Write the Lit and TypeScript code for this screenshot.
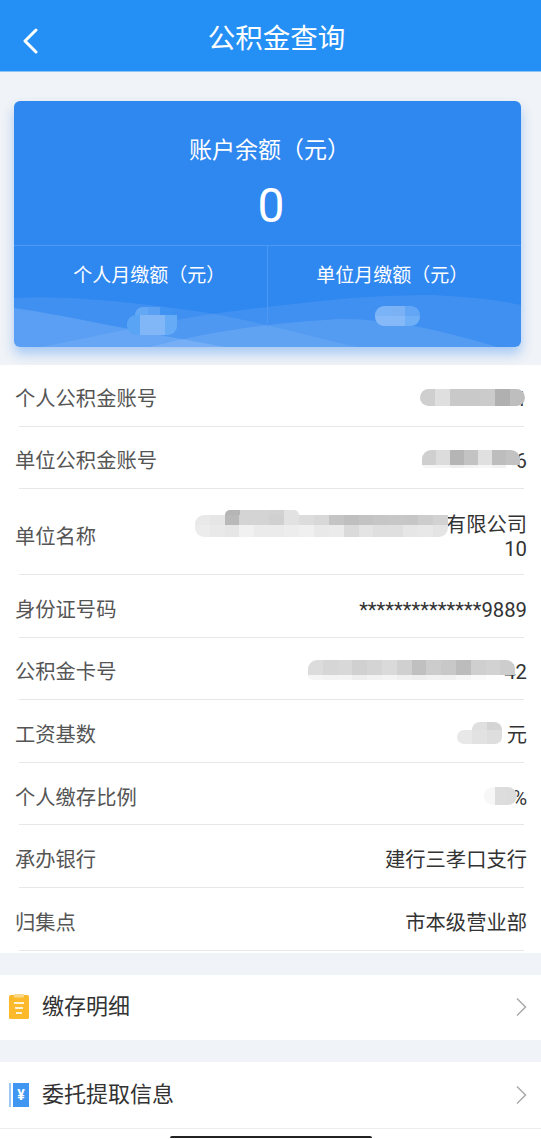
import { LitElement, html, css, svg } from "lit";
import { customElement, property } from "lit/decorators.js";
import { classMap } from "lit/directives/class-map.js";

type MosaicRow = { h: number; x?: number; top?: boolean; c: (string | null)[] };

@customElement("blur-patch")
class BlurPatch extends LitElement {
  @property({ attribute: false }) rows: MosaicRow[] = [];
  @property({ type: Number }) cw = 15;
  static styles = css`
    :host { display: block; position: relative; z-index: 2; flex: none; }
    .r { display: flex; overflow: hidden; width: max-content; }
    .r:first-child { border-top-left-radius: 9px; border-top-right-radius: 9px; }
    .r:last-child { border-bottom-left-radius: 9px; border-bottom-right-radius: 9px; }
    .r.top { border-top-left-radius: 9px; }
    .c { flex: none; }
  `;
  render() {
    return this.rows.map(
      (r) => html`<div class=${classMap({ r: true, top: !!r.top })} style="margin-left:${r.x ?? 0}px">
        ${r.c.map((c) => html`<div class="c" style="width:${this.cw}px;height:${r.h}px;background:${c ?? "transparent"}"></div>`)}
      </div>`
    );
  }
}

const back = svg`<path d="M36 31 L25 42 L36 53" fill="none" stroke="#fff" stroke-width="3" stroke-linecap="round" stroke-linejoin="round" transform="translate(-23 -29)"/>`;

@customElement("app-root")
class AppRoot extends LitElement {
  static styles = css`
    :host {
      display: block; width: 541px; height: 1139px; overflow: hidden; background: #fff;
      font-family: Roboto, "Noto Sans CJK SC", "Noto Sans", sans-serif; color: #333;
    }
    .header {
      height: 71px; background: #2490f5; border-bottom: 1px solid #8cc4f8;
      display: flex; align-items: center; justify-content: center; position: relative; color: #fff;
      font-size: 27.5px; line-height: 36px;
    }
    .header span { transform: translate(6px, 3px); }
    .backbtn { position: absolute; left: 23px; top: 28px; width: 16px; height: 26px; }
    .top { background: #f0f3f7; padding: 29px 20px 18px 14px; }
    .cardwrap { border-radius: 6px; box-shadow: 0 7px 12px rgba(47, 135, 240, .38); }
    .card {
      height: 246px; border-radius: 6px; background: #2f87f0; position: relative; overflow: hidden;
      display: flex; flex-direction: column; align-items: stretch; color: #fff; text-align: center;
    }
    .waves { position: absolute; inset: 0; width: 100%; height: 100%; }
    .bal-label { font-size: 23px; line-height: 34px; margin-top: 33px; padding-left: 4px; position: relative; }
    .bal { font-size: 48px; line-height: 56px; margin-top: 10px; padding-left: 7px; position: relative; }
    .split {
      position: relative; display: grid; grid-template-columns: 1fr 1fr; margin-top: 11px;
      border-top: 1px solid #4d98f3; flex: 1;
    }
    .cell { display: flex; flex-direction: column; align-items: center; padding-top: 15px; font-size: 19px; line-height: 30px; }
    .cell.l { border-right: 1px solid #4d98f3; height: 66px; padding-left: 18px; overflow: visible; box-sizing: content-box; }
    .cell.r { padding-right: 4px; }
    .patch-a { margin-top: 16px; transform: translateX(3px); }
    .patch-b { margin-top: 15px; transform: translateX(5px); }
    .list { padding: 0 17px 2.3px 19px; }
    .row {
      height: 62.6px; box-sizing: border-box; border-bottom: 1.5px solid #e7e7e7; padding-top: 8px;
      display: flex; justify-content: space-between; align-items: center;
      font-size: 20.3px; line-height: 28px;
    }
    .row:first-child { height: 61.5px; }
    .row.tall { height: 86px; padding-top: 10px; }
    .lab { color: #555; margin-left: -4px; }
    .val { display: flex; align-items: center; margin-right: -3px; color: #333; white-space: nowrap; }
    .val > blur-patch { margin-bottom: 4px; }
    .col { flex-direction: column; align-items: flex-end; line-height: 24px; }
    .line { display: flex; align-items: center; height: 24px; }
    .line blur-patch { margin-bottom: 2px; }
    .gap { height: 22px; background: #f0f3f7; }
    .item {
      height: 65px; display: flex; align-items: center; background: #fff; padding: 0 14px 0 9px;
      font-size: 22px; color: #333;
    }
    .item.b { height: 66px; border-bottom: 1.5px solid #eee; box-sizing: content-box; }
    .item svg.ic { width: 20px; height: 26px; flex: none; margin-right: 13px; }
    .item .t { flex: 1; padding-bottom: 6px; }
    .item svg.ch { width: 11px; height: 20px; flex: none; }
    .foot { height: 9.5px; display: flex; align-items: flex-end; justify-content: center; }
    .bar { width: 202px; height: 2.5px; background: #222; border-radius: 2px 2px 0 0; }
  `;

  row(label: string, val: unknown) {
    return html`<div class="row"><div class="lab">${label}</div><div class="val">${val}</div></div>`;
  }

  render() {
    const p1: MosaicRow[] = [{ h: 17, c: ["#cfcfcf", "#dfdfdf", "#c9c9c9", "#c9c9c9", "#cbcbcb", "#b0b0b0", "#bebebe"] }];
    const p2: MosaicRow[] = [
      { h: 15, c: ["#cfcfcf", "#dcdcdc", "#b5b5b5", "#c3c3c3", "#e0e0e0", "#bdbdbd", "#c2c2c2"] },
      { h: 3, c: ["#f6f6f6", "#f4f4f4", "#eeeeee", "#f3f3f3", "#f7f7f7", "#f2f2f2", null] },
    ];
    const p3: MosaicRow[] = [
      { h: 5, x: 30, c: ["#b5b5b5", "#d4d4d4", "#d4d4d4", "#d2d2d2", "#e2e2e2"] },
      { h: 10, x: 0, top: true, c: ["#e9e9e9", "#e6e6e6", "#b9b9b9", "#d4d4d4", "#d4d4d4", "#d0d0d0", "#e2e2e2", "#dcdcdc", "#d8d8d8", "#c4c4c4", "#bfbfbf", "#c3c3c3", "#c6c6c6", "#c7c7c7", "#c6c6c6", "#cdcdcd", "#d2d2d2"] },
      { h: 12, x: 0, c: ["#ececec", "#e9e9e9", "#e6e6e6", "#f1f1f1", "#ebebeb", "#ebebeb", "#ededed", "#f0f0f0", "#e9e9e9", "#ebebeb", "#dadada", "#e4e4e4", "#dfdfdf", "#dfdfdf", "#e6e6e6", "#e8e8e8", "#e4e4e4"] },
    ];
    const p5: MosaicRow[] = [
      { h: 15, c: ["#dcdcdc", "#d6d6d6", "#d8d8d8", "#d0d0d0", "#d4d4d4", "#dadada", "#d0d0d0", "#c0c0c0", "#cccccc", "#c8c8c8", "#bcbcbc", "#cfcfcf", "#d2d2d2", "#cdcdcd"] },
      { h: 5, c: ["#f5f5f5", "#f3f3f3", "#f4f4f4", "#eeeeee", "#f2f2f2", "#f4f4f4", "#f0f0f0", "#eeeeee", "#f1f1f1", "#f1f1f1", "#f6f6f6", "#fafafa", "#fdfdfd", null] },
    ];
    const p6: MosaicRow[] = [
      { h: 8, x: 15, c: ["#dfdfdf", "#d4d4d4"] },
      { h: 14, top: true, c: ["#e8e8e8", "#e2e2e2", "#dedede"] },
    ];
    const p7: MosaicRow[] = [{ h: 18, c: ["#f7f7f7", "#dddddd", "#dcdcdc"] }];
    const pa: MosaicRow[] = [
      { h: 8, x: 8, c: ["#63a8f5", "#5aa0f3", "#3f93f2"] },
      { h: 20, top: true, c: ["#5aa4f5", "#81b7f7", "#81b7f7", "#65abf6"] },
    ];
    const pb: MosaicRow[] = [
      { h: 10, c: ["#7ab3f7", "#7bb2f6", "#62a6f5"] },
      { h: 10, c: ["#85b9f8", "#85b9f8", "#6eaff6"] },
    ];

    return html`
      <div class="header">
        <svg class="backbtn" viewBox="0 0 16 26">${back}</svg>
        <span>公积金查询</span>
      </div>
      <div class="top">
        <div class="cardwrap">
          <div class="card">
            <svg class="waves" viewBox="0 0 507 246" preserveAspectRatio="none">
              <path d="M0 197C40 194 120 200 201 213C253 223 300 236 343 246L0 246Z" fill="#fff" fill-opacity=".08"/>
              <path d="M0 207C50 214 130 232 211 246L0 246Z" fill="#fff" fill-opacity=".14"/>
              <path d="M26 246C90 234 170 214 253 206C320 198 360 194 420 194C460 196 490 200 507 204L507 246Z" fill="#fff" fill-opacity=".08"/>
              <path d="M136 246C190 232 250 222 326 218C380 218 430 230 483 246Z" fill="#fff" fill-opacity=".11"/>
            </svg>
            <div class="bal-label">账户余额（元）</div>
            <div class="bal">0</div>
            <div class="split">
              <div class="cell l"><div>个人月缴额（元）</div><blur-patch class="patch-a" .rows=${pa} .cw=${12.5}></blur-patch></div>
              <div class="cell r"><div>单位月缴额（元）</div><blur-patch class="patch-b" .rows=${pb} .cw=${15}></blur-patch></div>
            </div>
          </div>
        </div>
      </div>
      <div class="list">
        ${this.row("个人公积金账号", html`<blur-patch .rows=${p1} style="margin-right:-9px"></blur-patch><span>1</span>`)}
        ${this.row("单位公积金账号", html`<blur-patch .rows=${p2} .cw=${14} style="margin-right:-4px"></blur-patch><span>6</span>`)}
        <div class="row tall">
          <div class="lab">单位名称</div>
          <div class="val col">
            <div class="line"><blur-patch .rows=${p3} .cw=${14.9} style="margin-right:-2px"></blur-patch><span>有限公司</span></div>
            <div>10</div>
          </div>
        </div>
        ${this.row("身份证号码", "**************9889")}
        ${this.row("公积金卡号", html`<blur-patch .rows=${p5} .cw=${14.8} style="margin-right:-11px"></blur-patch><span>42</span>`)}
        ${this.row("工资基数", html`<blur-patch .rows=${p6} style="margin-right:5px"></blur-patch><span>元</span>`)}
        ${this.row("个人缴存比例", html`<blur-patch .rows=${p7} .cw=${11} style="margin-right:-5px"></blur-patch><span>%</span>`)}
        ${this.row("承办银行", "建行三孝口支行")}
        ${this.row("归集点", "市本级营业部")}
      </div>
      <div class="gap"></div>
      <div class="item">
        <svg class="ic" viewBox="0 0 20 26">
          <rect x="0" y="1" width="20" height="24" rx="1.5" fill="#fdb92c"/>
          <rect x="5" y="0" width="10" height="3.5" rx="1" fill="#fbd98a"/>
          <path d="M5 9h10M6 14h8M7 19h6" stroke="#fff3d6" stroke-width="2"/>
        </svg>
        <div class="t">缴存明细</div>
        <svg class="ch" viewBox="0 0 11 20"><path d="M1 1.5L9.5 10L1 18.5" fill="none" stroke="#aaa" stroke-width="1.5"/></svg>
      </div>
      <div class="gap"></div>
      <div class="item b">
        <svg class="ic" viewBox="0 0 20 26">
          <rect x="0" y="1" width="2" height="24" fill="#9cc8f5"/>
          <rect x="4" y="1" width="16" height="24" fill="#3f97f2"/>
          <text x="12" y="18" text-anchor="middle" font-size="14" font-weight="700" font-family="Roboto, sans-serif" fill="#fff">¥</text>
        </svg>
        <div class="t">委托提取信息</div>
        <svg class="ch" viewBox="0 0 11 20"><path d="M1 1.5L9.5 10L1 18.5" fill="none" stroke="#aaa" stroke-width="1.5"/></svg>
      </div>
      <div class="foot"><div class="bar"></div></div>
    `;
  }
}
